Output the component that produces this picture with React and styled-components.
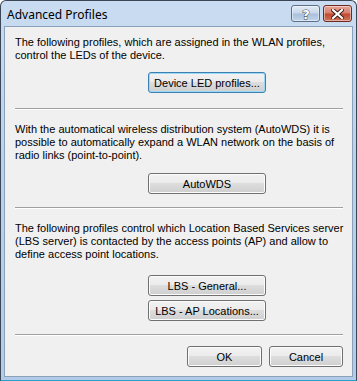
import React from 'react';
import styled, { createGlobalStyle } from 'styled-components';

const Global = createGlobalStyle`
  html, body {
    margin: 0;
    padding: 0;
    background: #ffffff;
  }
`;

const Window = styled.div`
  width: 357px;
  height: 381px;
  box-sizing: border-box;
  border: 1px solid #3b4656;
  border-bottom-color: #2aa0cf;
  border-radius: 6px 6px 0 0;
  background: linear-gradient(180deg, #c9dcf1 0%, #bcd2ec 40%, #b2cbe8 100%);
  display: flex;
  flex-direction: column;
  overflow: hidden;
`;

const TitleBar = styled.div`
  height: 25px;
  display: flex;
  align-items: flex-start;
  padding: 0 4px 0 6px;
  flex-shrink: 0;
`;

const Title = styled.div`
  flex: 1;
  font-family: "Noto Sans", "Open Sans", sans-serif;
  font-size: 12px;
  line-height: 16px;
  margin-top: 6px;
  color: #000;
`;

const CaptionButtons = styled.div`
  display: flex;
  gap: 3px;
  margin-top: 4px;
`;

const CaptionButton = styled.div`
  width: 29px;
  height: 17px;
  box-sizing: border-box;
  border: 1px solid ${p => (p.$close ? '#6d2a22' : '#5d6f88')};
  border-radius: 3px;
  display: flex;
  align-items: center;
  justify-content: center;
  background: ${p =>
    p.$close
      ? 'linear-gradient(180deg, #e7a699 0%, #d7806f 45%, #c04a32 55%, #cf7558 100%)'
      : 'linear-gradient(180deg, #e2ecf7 0%, #c8d8ea 45%, #a9c0db 55%, #c2d6ec 100%)'};
  box-shadow: inset 0 0 0 1px rgba(255, 255, 255, 0.45);
`;

const Panel = styled.div`
  flex: 1;
  margin: 0 3px 3px 3px;
  border: 1px solid #8ba0bb;
  background: #f0f0f0;
  padding: 9px 9px 0 10px;
  display: flex;
  flex-direction: column;
  font-family: "Liberation Sans", Arial, sans-serif;
  font-size: 11px;
  color: #000;
`;

const Section = styled.div`
  display: flex;
  flex-direction: column;
  padding-top: ${p => p.$top || 0}px;
  padding-bottom: ${p => p.$bottom || 0}px;
`;

const Text = styled.p`
  margin: 0;
  line-height: 13px;
  white-space: nowrap;
`;

const ButtonColumn = styled.div`
  display: flex;
  flex-direction: column;
  align-items: flex-start;
  gap: 4px;
  margin-top: ${p => p.$gap || 10}px;
  padding-left: 133px;
`;

const Button = styled.button`
  width: ${p => p.$width || 118}px;
  height: 21px;
  box-sizing: border-box;
  border: 1px solid ${p => (p.$focused ? '#3c7fb1' : '#707070')};
  border-radius: 3px;
  padding: 0;
  font-family: "Liberation Sans", Arial, sans-serif;
  font-size: 11px;
  font-weight: 400;
  color: #000;
  background: linear-gradient(180deg, #f2f2f2 0%, #ebebeb 49%, #dddddd 50%, #cfcfcf 100%);
  box-shadow: inset 0 0 0 1px ${p => (p.$focused ? '#9ad8f5' : '#fcfcfc')};
  cursor: default;
`;

const Separator = styled.div`
  height: 0;
  border-top: 1px solid #a0a0a0;
  border-bottom: 1px solid #ffffff;
`;

const Footer = styled.div`
  display: flex;
  justify-content: flex-end;
  gap: 7px;
  padding-top: 10px;
`;

function HelpGlyph() {
  return (
    <svg width="12" height="13" viewBox="0 0 12 13">
      <text x="6" y="11.5" textAnchor="middle" fontFamily="DejaVu Sans, sans-serif" fontSize="13"
        fontWeight="bold" fill="#fff" stroke="#2d3f57" strokeWidth="0.9" paintOrder="stroke">?</text>
    </svg>
  );
}

function CloseGlyph() {
  return (
    <svg width="13" height="10" viewBox="0 0 13 10">
      <path d="M2 1 L11 9 M11 1 L2 9" stroke="#3b1a14" strokeWidth="4" strokeLinecap="square" />
      <path d="M2 1 L11 9 M11 1 L2 9" stroke="#ffffff" strokeWidth="2.2" strokeLinecap="square" />
    </svg>
  );
}

export default function App() {
  return (
    <>
      <Global />
      <Window>
        <TitleBar>
          <Title>Advanced Profiles</Title>
          <CaptionButtons>
            <CaptionButton><HelpGlyph /></CaptionButton>
            <CaptionButton $close><CloseGlyph /></CaptionButton>
          </CaptionButtons>
        </TitleBar>
        <Panel>
          <Section $bottom={15}>
            <Text>The following profiles, which are assigned in the WLAN profiles,</Text>
            <Text>control the LEDs of the device.</Text>
            <ButtonColumn>
              <Button $focused>Device LED profiles...</Button>
            </ButtonColumn>
          </Section>
          <Separator />
          <Section $top={13} $bottom={13}>
            <Text>With the automatical wireless distribution system (AutoWDS) it is</Text>
            <Text>possible to automatically expand a WLAN network on the basis of</Text>
            <Text>radio links (point-to-point).</Text>
            <ButtonColumn $gap={11}>
              <Button>AutoWDS</Button>
            </ButtonColumn>
          </Section>
          <Separator />
          <Section $top={13} $bottom={13}>
            <Text>The following profiles control which Location Based Services server</Text>
            <Text>(LBS server) is contacted by the access points (AP) and allow to</Text>
            <Text>define access point locations.</Text>
            <ButtonColumn $gap={14}>
              <Button>LBS - General...</Button>
              <Button>LBS - AP Locations...</Button>
            </ButtonColumn>
          </Section>
          <Separator />
          <Footer>
            <Button $width={75}>OK</Button>
            <Button $width={74}>Cancel</Button>
          </Footer>
        </Panel>
      </Window>
    </>
  );
}
